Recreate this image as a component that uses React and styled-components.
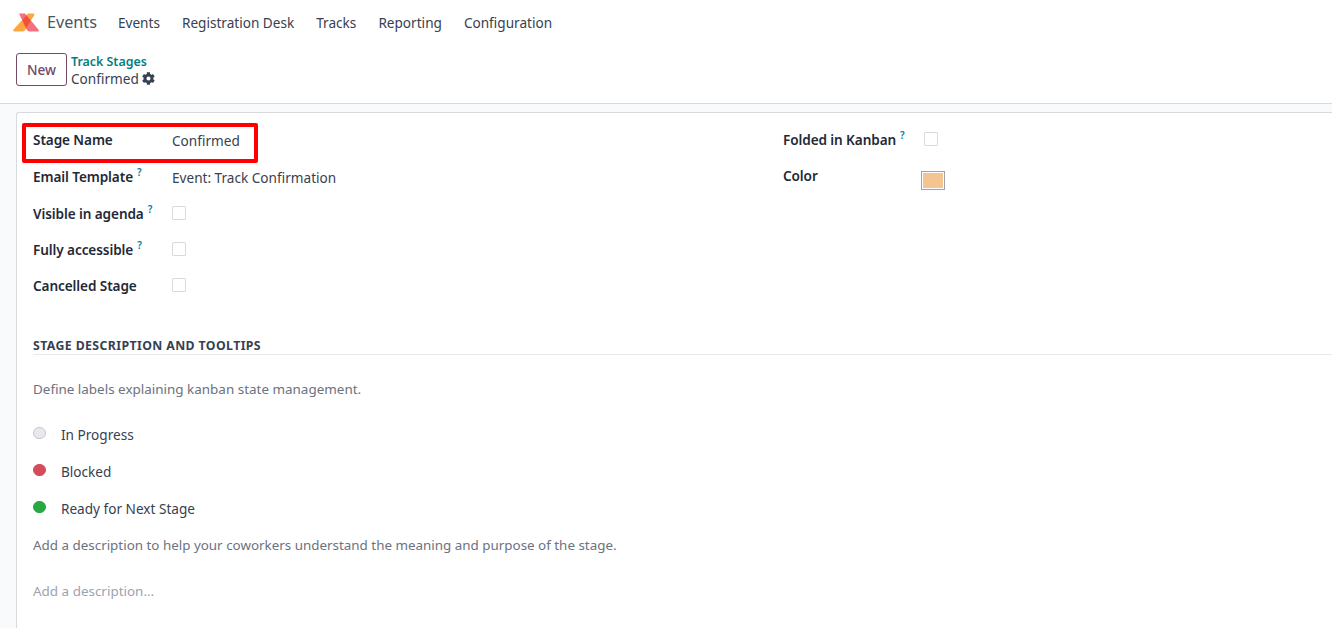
import React from "react";
import styled, { createGlobalStyle } from "styled-components";

const GlobalStyle = createGlobalStyle`
  html, body {
    margin: 0;
    height: 100%;
    overflow: hidden;
    background: #f9fafb;
    font-family: "Noto Sans", "Open Sans", sans-serif;
    font-size: 14px;
    color: #374151;
  }
`;

const Page = styled.div`
  width: 1332px;
  height: 628px;
  overflow: hidden;
`;

const Navbar = styled.nav`
  height: 46px;
  box-sizing: border-box;
  background: #fff;
  display: flex;
  align-items: center;
  padding: 0 0 2px 13px;
`;

const Brand = styled.div`
  display: flex;
  align-items: center;
  gap: 8px;
  font-size: 16.2px;
  color: #4b5563;
  margin-right: 21px;
`;

const NavLink = styled.a`
  font-size: 13.6px;
  color: #374151;
  margin-right: 22px;
`;

const ControlPanel = styled.div`
  height: 58px;
  box-sizing: border-box;
  background: #fff;
  border-bottom: 1px solid #d8dadd;
  display: flex;
  align-items: flex-start;
  gap: 4px;
  padding: 7px 0 0 16px;
`;

const NewButton = styled.button`
  width: 51px;
  height: 33px;
  background: #fff;
  border: 1px solid #714b67;
  border-radius: 3px;
  color: #714b67;
  font: 500 13.6px "Noto Sans", sans-serif;
  padding: 0;
`;

const Crumbs = styled.div`
  line-height: 17px;
  font-size: 13.6px;
`;

const CrumbLink = styled.div`
  color: #017e84;
  font-size: 12.4px;
  font-weight: 600;
`;

const CrumbCurrent = styled.div`
  display: flex;
  align-items: center;
  gap: 3px;
  color: #374151;
`;

const Sheet = styled.main`
  margin: 8px 0 0 16px;
  height: 560px;
  background: #fff;
  border: 1px solid #d8dadd;
  border-right: 0;
  border-radius: 3px 0 0 0;
  padding: 9px 0 0 16px;
`;

const Columns = styled.div`
  display: grid;
  grid-template-columns: 750px 1fr;
`;

const Field = styled.div`
  display: flex;
  align-items: center;
  height: ${(p) => p.$h || 36}px;
`;

const Label = styled.label`
  width: ${(p) => p.$w || 139}px;
  flex: none;
  font-size: 13.6px;
  font-weight: 600;
  letter-spacing: -0.1px;
  color: #1f2937;
  white-space: nowrap;
  margin-top: ${(p) => p.$shift || 0}px;
`;

const Help = styled.sup`
  color: #0180a5;
  font-size: 10px;
  font-weight: 600;
  margin-left: 4px;
`;

const Value = styled.span`
  font-size: 13.6px;
  color: #374151;
  margin-top: ${(p) => p.$shift || 0}px;
`;

const Check = styled.span`
  width: 12px;
  height: 12px;
  border: 1px solid #d8dadd;
  border-radius: 1px;
  background: #fff;
  display: block;
  margin-top: ${(p) => p.$shift || 0}px;
`;

const Swatch = styled.span`
  width: 24px;
  height: 19px;
  box-sizing: border-box;
  margin: 8px 0 0 -2px;
  background: #f4c592;
  border: 1px solid #9ca3af;
  box-shadow: inset 0 0 0 1px #fff;
  display: block;
`;

const SectionTitle = styled.h3`
  margin: 34px 0 0;
  border-bottom: 1px solid #e7e9ed;
  font-size: 12.3px;
  font-weight: 700;
  letter-spacing: 0.4px;
  color: #374151;
  line-height: 17px;
`;

const Muted = styled.p`
  margin: ${(p) => p.$top}px 0 0;
  font-size: ${(p) => p.$size || 13.6}px;
  line-height: 18px;
  color: ${(p) => p.$color || "#6b7280"};
`;

const StateList = styled.div`
  margin-top: 18px;
`;

const StateRow = styled.div`
  display: flex;
  align-items: center;
  height: 37px;
  gap: 15.5px;
  font-size: 13.6px;
`;

const Dot = styled.span`
  width: 12.5px;
  height: 12.5px;
  border-radius: 50%;
  margin-top: -3px;
  box-sizing: border-box;
  background: ${(p) => p.$color};
  border: 1px solid ${(p) => p.$line || p.$color};
`;

const Highlight = styled.div`
  position: absolute;
  left: 22px;
  top: 123px;
  width: 236px;
  height: 40px;
  box-sizing: border-box;
  border: 4px solid #f00;
  border-radius: 2px;
`;

const orangeLeg = "M15 .5h5c1.400 0 1.800 .8 1 2L12.500 16.500c-1 1.500-2 2-3.500 2H1.500C.3 18.500-.2 17.700.6 16.600z";
const pinkLeg = "M6 .5h6l13.400 16c.8 1.100.3 2-1 2H17c-1.500 0-2.400-.6-3.200-1.800z";

const Logo = () => (
  <svg width="26" height="19" viewBox="0 0 26 19">
    <defs>
      <clipPath id="logoOverlap">
        <path d={pinkLeg} />
      </clipPath>
    </defs>
    <path d={pinkLeg} fill="#f4707f" />
    <path d={orangeLeg} fill="#fba63f" />
    <path d={orangeLeg} fill="#f2503c" clipPath="url(#logoOverlap)" />
  </svg>
);

const Gear = () => (
  <svg width="13" height="13" viewBox="0 0 512 512" fill="#374151">
    <path d="M487 316l-43-25a196 196 0 0 0 0-70l43-25c5-3 7-9 5-14-11-36-30-68-55-95-4-4-10-5-15-2l-43 25c-18-15-39-27-61-35V25c0-6-4-10-9-11-37-8-75-8-110 0-5 1-9 5-9 11v50c-22 8-43 20-61 35L86 85c-5-3-11-2-15 2-25 27-44 59-55 95-2 5 0 11 5 14l43 25a196 196 0 0 0 0 70l-43 25c-5 3-7 9-5 14 11 36 30 68 55 95 4 4 10 5 15 2l43-25c18 15 39 27 61 35v50c0 6 4 10 9 11 37 8 75 8 110 0 5-1 9-5 9-11v-50c22-8 43-20 61-35l43 25c5 3 11 2 15-2 25-27 44-59 55-95 2-5 0-11-5-14zM256 336a80 80 0 1 1 0-160 80 80 0 0 1 0 160z" />
  </svg>
);

const navItems = ["Events", "Registration Desk", "Tracks", "Reporting", "Configuration"];

const App = () => (
  <Page>
    <GlobalStyle />
    <Navbar>
      <Brand>
        <Logo />
        Events
      </Brand>
      {navItems.map((item) => (
        <NavLink key={item}>{item}</NavLink>
      ))}
    </Navbar>
    <ControlPanel>
      <NewButton>New</NewButton>
      <Crumbs>
        <CrumbLink>Track Stages</CrumbLink>
        <CrumbCurrent>
          Confirmed <Gear />
        </CrumbCurrent>
      </Crumbs>
    </ControlPanel>
    <Sheet>
      <Columns>
        <div>
          <Field>
            <Label $shift={-2}>Stage Name</Label>
            <Value>Confirmed</Value>
          </Field>
          <Field>
            <Label $shift={-2}>
              Email Template<Help>?</Help>
            </Label>
            <Value $shift={2}>Event: Track Confirmation</Value>
          </Field>
          <Field $h={37}>
            <Label>
              Visible in agenda<Help>?</Help>
            </Label>
            <Check />
          </Field>
          <Field>
            <Label $shift={-2}>
              Fully accessible<Help>?</Help>
            </Label>
            <Check />
          </Field>
          <Field>
            <Label>Cancelled Stage</Label>
            <Check />
          </Field>
        </div>
        <div>
          <Field>
            <Label $w={141} $shift={-4}>
              Folded in Kanban<Help>?</Help>
            </Label>
            <Check $shift={-2} />
          </Field>
          <Field>
            <Label $w={140} $shift={-2}>
              Color
            </Label>
            <Swatch />
          </Field>
        </div>
      </Columns>
      <SectionTitle>STAGE DESCRIPTION AND TOOLTIPS</SectionTitle>
      <Muted $top={25} $size={13.45}>
        Define labels explaining kanban state management.
      </Muted>
      <StateList>
        <StateRow>
          <Dot $color="#e7e9ed" $line="#c4c8ce" />
          In Progress
        </StateRow>
        <StateRow>
          <Dot $color="#d44c59" />
          Blocked
        </StateRow>
        <StateRow>
          <Dot $color="#28a745" />
          Ready for Next Stage
        </StateRow>
      </StateList>
      <Muted $top={9} $size={13.4}>
        Add a description to help your coworkers understand the meaning and purpose of the stage.
      </Muted>
      <Muted $top={28} $size={13.45} $color="#9ca3af">
        Add a description...
      </Muted>
    </Sheet>
    <Highlight />
  </Page>
);

export default App;
